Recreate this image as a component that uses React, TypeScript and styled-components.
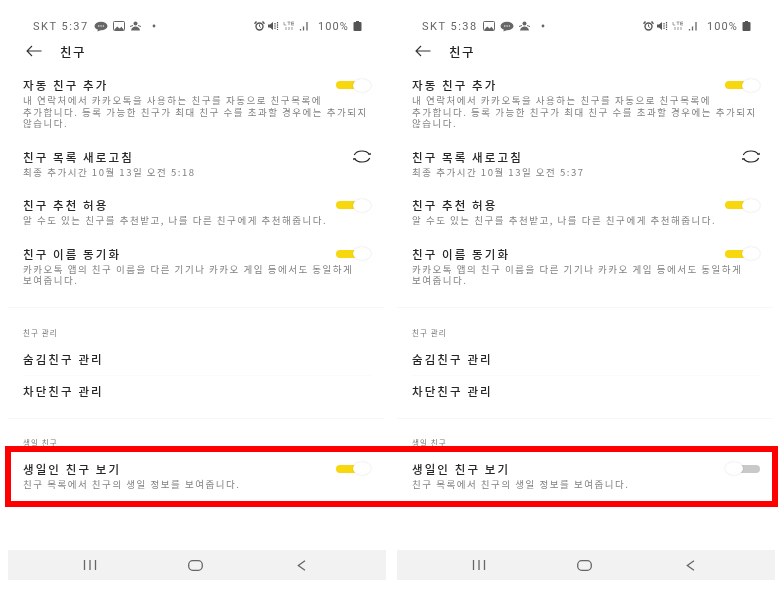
import React from "react";
import styled, { createGlobalStyle } from "styled-components";

const Global = createGlobalStyle`
  html, body { margin: 0; padding: 0; background: #fff; }
  body { font-family: "Noto Sans CJK KR", "Noto Sans", sans-serif; }
  #root { width: 784px; height: 590px; overflow: hidden; }
`;

const Page = styled.div`
  position: relative;
  width: 784px;
  height: 590px;
  box-sizing: border-box;
  padding: 18px 9px 10px 8px;
  display: flex;
  gap: 11px;
  background: #fff;
`;

const Phone = styled.section`
  width: 378px;
  display: flex;
  flex-direction: column;
  filter: blur(0.45px);
`;

const StatusBar = styled.div`
  height: 16px;
  padding: 0 24px 0 25px;
  display: flex;
  align-items: center;
  color: #666;
  font-family: "Roboto", sans-serif;
  font-size: 11px;
  letter-spacing: 1.5px;
  white-space: nowrap;
`;

const StatusGroup = styled.div`
  display: flex;
  align-items: center;
  gap: 5px;
`;

const StatusRight = styled(StatusGroup)`
  margin-left: auto;
  gap: 4px;
`;

const Percent = styled.span`
  margin-left: 5px;
  letter-spacing: 1.1px;
`;

const Header = styled.header`
  height: 26px;
  margin-top: 4px;
  padding-left: 18px;
  display: flex;
  align-items: center;
  gap: 18px;
`;

const HeaderTitle = styled.h1`
  margin: 0;
  font-size: 12.5px;
  font-weight: 500;
  letter-spacing: 1.5px;
  color: #222;
`;

const Rows = styled.div`
  margin-top: 13px;
  display: flex;
  flex-direction: column;
`;

const Row = styled.div`
  padding: 0 15px 19px;
`;

const BirthdayRow = styled(Row)`
  margin-top: 12px;
  padding-bottom: 0;
`;

const RowHead = styled.div`
  height: 16px;
  display: flex;
  align-items: center;
  justify-content: space-between;
`;

const Title = styled.div`
  font-size: 11.5px;
  font-weight: 500;
  line-height: 16px;
  letter-spacing: 2.1px;
  color: #262626;
  white-space: nowrap;
`;

const Desc = styled.p`
  margin: 2px 0 0;
  font-size: 9.5px;
  line-height: 11.5px;
  letter-spacing: 1.52px;
  color: #808080;
  white-space: pre;
`;

const Divider = styled.div<{ $top: number }>`
  height: 1px;
  margin-top: ${(p) => p.$top}px;
  margin-right: 2px;
  background: #f7f7f7;
`;

const SectionLabel = styled.div<{ $top: number }>`
  margin-top: ${(p) => p.$top}px;
  padding-left: 15px;
  height: 12px;
  font-size: 7.5px;
  line-height: 12px;
  letter-spacing: 1.1px;
  color: #777;
`;

const LinkRow = styled.div<{ $top: number }>`
  margin: ${(p) => p.$top}px 15px 0;
`;

const ThinLine = styled.div`
  height: 1px;
  margin: 8px 15px 0;
  background: #fafafa;
`;

const Track = styled.div`
  position: relative;
  flex: none;
  width: 35px;
  height: 12px;
  display: flex;
  align-items: center;
`;

const TrackFill = styled.div<{ $on: boolean }>`
  width: ${(p) => (p.$on ? "21px" : "23px")};
  height: 8px;
  margin-left: ${(p) => (p.$on ? "0" : "12px")};
  border-radius: 4px;
  background: ${(p) => (p.$on ? "#f7d80f" : "#c9c9c9")};
`;

const Knob = styled.div<{ $on: boolean }>`
  position: absolute;
  top: -0.5px;
  ${(p) => (p.$on ? "right: 0;" : "left: 0;")}
  width: 18px;
  height: 13px;
  border-radius: 50%;
  background: #fff;
  box-shadow: 0 0 2px rgba(0, 0, 0, 0.16);
`;

const NavBar = styled.nav`
  margin-top: auto;
  height: 30px;
  padding-right: 3px;
  display: grid;
  grid-template-columns: repeat(3, 105.5px);
  justify-content: center;
  align-items: center;
  justify-items: center;
  background: #f2f2f2;
`;

const Highlight = styled.div`
  position: absolute;
  left: 5px;
  top: 446px;
  width: 773px;
  height: 61px;
  box-sizing: border-box;
  border: 6px solid #fe0000;
  pointer-events: none;
`;

const DotIcon = styled.svg`
  margin-left: 6px;
`;

const AlarmIcon = styled.svg`
  margin-right: -2px;
`;

const Toggle = ({ on }: { on: boolean }) => (
  <Track>
    <TrackFill $on={on} />
    <Knob $on={on} />
  </Track>
);

const Chat = () => (
  <svg width="14" height="11" viewBox="0 0 14 11">
    <ellipse cx="7" cy="5" rx="6.5" ry="4.3" fill="#666" />
    <path d="M4 8l-.6 2.6L7 9z" fill="#666" />
    <path d="M4 5h6" stroke="#fff" strokeWidth="1.2" strokeDasharray="1.4 1" />
  </svg>
);

const Pic = () => (
  <svg width="12" height="10" viewBox="0 0 12 10">
    <rect x="0.5" y="0.5" width="11" height="9" rx="1" fill="none" stroke="#666" />
    <path d="M1 9l3.2-3.6L6.500 7.600l2-1.800L11 9z" fill="#666" />
  </svg>
);

const Person = () => (
  <svg width="11" height="10" viewBox="0 0 11 10">
    <circle cx="5.5" cy="2.5" r="2" fill="#666" />
    <path d="M1 9.5c.6-3 2.400-4 4.500-4s3.900 1 4.500 4z" fill="#666" />
    <path d="M0 5.500l3-1M11 5.500l-3-1" stroke="#666" />
  </svg>
);

const Dot = () => (
  <DotIcon width="4" height="4" viewBox="0 0 4 4">
    <circle cx="2" cy="2" r="1.4" fill="#666" />
  </DotIcon>
);

const Alarm = () => (
  <AlarmIcon width="11" height="10" viewBox="0 0 11 10">
    <circle cx="5.500" cy="5.500" r="3.500" fill="none" stroke="#555" strokeWidth="1.4" />
    <path d="M.5 2.800L2.500 .5M10.500 2.800L8.500 .5" stroke="#555" strokeWidth="1.4" />
    <path d="M5.500 3.500v2l1.300 1" stroke="#555" fill="none" />
  </AlarmIcon>
);

const Mute = () => (
  <svg width="12" height="10" viewBox="0 0 12 10">
    <path d="M1 3.500h2L6 1v8L3 6.500H1z" fill="#555" />
    <path d="M8 2v6M10.500 1v8" stroke="#555" strokeWidth="1.2" strokeDasharray="1.500 .8" />
  </svg>
);

const Lte = () => (
  <svg width="12" height="10" viewBox="0 0 12 10">
    <path d="M1 1v3h2.200M4.500 1h3M6 1v3M11 1H8.500v3H11M8.500 2.500H11" stroke="#888" strokeWidth=".8" fill="none" />
    <path d="M3 6v3M6 6v3M9 6v3" stroke="#999" strokeWidth="1" />
  </svg>
);

const Signal = () => (
  <svg width="10" height="10" viewBox="0 0 10 10">
    <path d="M1.500 8v1.500M4.500 5.500v4M8 1v8.500" stroke="#666" strokeWidth="1.300" />
  </svg>
);

const Battery = () => (
  <svg width="9" height="10" viewBox="0 0 9 10">
    <path d="M3 0h3v1h1.500a1 1 0 0 1 1 1v7a1 1 0 0 1-1 1h-6a1 1 0 0 1-1-1V2a1 1 0 0 1 1-1H3z" fill="#555" />
  </svg>
);

const BackArrow = () => (
  <svg width="16" height="12" viewBox="0 0 16 12">
    <path d="M15.500 6H1M6 1L1 6l5 5" fill="none" stroke="#333" strokeWidth="1.100" />
  </svg>
);

const Refresh = () => (
  <svg width="18" height="13" viewBox="0 0 18 13">
    <path d="M1.300 5C2.500 2.400 5.400 1 9 1s5.800 1.200 7.200 3.200" fill="none" stroke="#222" strokeWidth="1.200" />
    <path d="M16.700 8C15.500 10.600 12.600 12 9 12s-5.800-1.200-7.200-3.200" fill="none" stroke="#222" strokeWidth="1.200" />
    <path d="M14.800 4.600l2.900.5.100-2.400zM3.200 8.400l-2.900-.5-.1 2.400z" fill="#222" />
  </svg>
);

const NavLines = () => (
  <svg width="14" height="10" viewBox="0 0 14 10">
    <path d="M1.500 0v10M7 0v10M12.500 0v10" stroke="#666" strokeWidth="1.300" />
  </svg>
);

const NavHome = () => (
  <svg width="15" height="11" viewBox="0 0 15 11">
    <rect x="0.700" y="0.700" width="13.600" height="9.600" rx="4" fill="none" stroke="#666" strokeWidth="1.300" />
  </svg>
);

const NavBack = () => (
  <svg width="9" height="11" viewBox="0 0 9 11">
    <path d="M8 .7L1.300 5.500 8 10.300" fill="none" stroke="#666" strokeWidth="1.300" />
  </svg>
);

type PhoneProps = {
  time: string;
  icons: React.ReactNode;
  refreshed: string;
  birthday: boolean;
};

const Screen = ({ time, icons, refreshed, birthday }: PhoneProps) => (
  <Phone>
    <StatusBar>
      <StatusGroup>
        <span>SKT {time}</span>
        {icons}
        <Person />
        <Dot />
      </StatusGroup>
      <StatusRight>
        <Alarm />
        <Mute />
        <Lte />
        <Signal />
        <Percent>100%</Percent>
        <Battery />
      </StatusRight>
    </StatusBar>
    <Header>
      <BackArrow />
      <HeaderTitle>친구</HeaderTitle>
    </Header>
    <Rows>
      <Row>
        <RowHead>
          <Title>자동 친구 추가</Title>
          <Toggle on />
        </RowHead>
        <Desc>{"내 연락처에서 카카오톡을 사용하는 친구를 자동으로 친구목록에\n추가합니다. 등록 가능한 친구가 최대 친구 수를 초과할 경우에는 추가되지\n않습니다."}</Desc>
      </Row>
      <Row>
        <RowHead>
          <Title>친구 목록 새로고침</Title>
          <Refresh />
        </RowHead>
        <Desc>최종 추가시간 10월 13일 오전 {refreshed}</Desc>
      </Row>
      <Row>
        <RowHead>
          <Title>친구 추천 허용</Title>
          <Toggle on />
        </RowHead>
        <Desc>알 수도 있는 친구를 추천받고, 나를 다른 친구에게 추천해줍니다.</Desc>
      </Row>
      <Row>
        <RowHead>
          <Title>친구 이름 동기화</Title>
          <Toggle on />
        </RowHead>
        <Desc>{"카카오톡 앱의 친구 이름을 다른 기기나 카카오 게임 등에서도 동일하게\n보여줍니다."}</Desc>
      </Row>
    </Rows>
    <Divider $top={1} />
    <SectionLabel $top={19}>친구 관리</SectionLabel>
    <LinkRow $top={12}>
      <Title>숨김친구 관리</Title>
    </LinkRow>
    <ThinLine />
    <LinkRow $top={7}>
      <Title>차단친구 관리</Title>
    </LinkRow>
    <Divider $top={19} />
    <SectionLabel $top={18}>생일 친구</SectionLabel>
    <BirthdayRow>
      <RowHead>
        <Title>생일인 친구 보기</Title>
        <Toggle on={birthday} />
      </RowHead>
      <Desc>친구 목록에서 친구의 생일 정보를 보여줍니다.</Desc>
    </BirthdayRow>
    <NavBar>
      <NavLines />
      <NavHome />
      <NavBack />
    </NavBar>
  </Phone>
);

export default function App() {
  return (
    <>
      <Global />
      <Page>
        <Screen
          time="5:37"
          icons={
            <>
              <Chat />
              <Pic />
            </>
          }
          refreshed="5:18"
          birthday
        />
        <Screen
          time="5:38"
          icons={
            <>
              <Pic />
              <Chat />
            </>
          }
          refreshed="5:37"
          birthday={false}
        />
        <Highlight />
      </Page>
    </>
  );
}
